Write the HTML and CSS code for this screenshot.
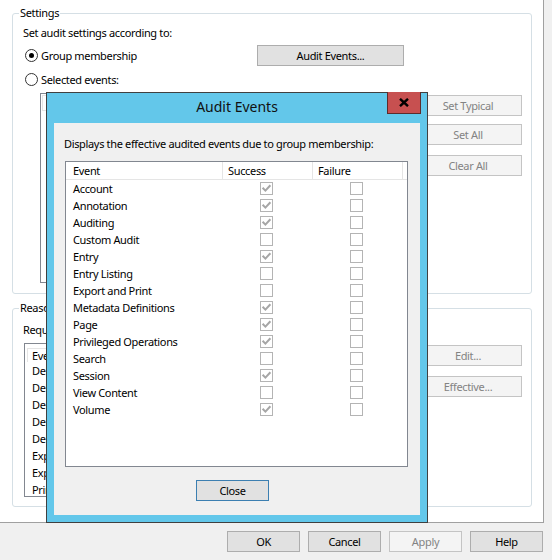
FILE: index.html
```html
<!DOCTYPE html>
<html>
<head>
<meta charset="utf-8">
<title>Audit Settings</title>
<link rel="stylesheet" href="styles.css">
</head>
<body>
<div class="app">
  <div class="top">
    <div class="panel">
      <fieldset class="group settings">
        <legend>Settings</legend>
        <div class="intro">Set audit settings according to:</div>
        <div class="choice-row first">
          <label class="radio-label"><span class="radio checked"></span>Group membership</label>
          <button class="btn audit-btn">Audit Events...</button>
        </div>
        <div class="choice-row second">
          <label class="radio-label"><span class="radio"></span>Selected events:</label>
        </div>
        <div class="area events-area">
          <div class="listbox events-list">
            <div class="list-head">Event</div>
          </div>
          <div class="side-buttons">
            <button class="btn disabled">Set Typical</button>
            <button class="btn disabled set-all">Set All</button>
            <button class="btn disabled clear-all">Clear All</button>
          </div>
        </div>
      </fieldset>
      <fieldset class="group reasons">
        <legend>Reasons</legend>
        <div class="intro req-text">Required:</div>
        <div class="area reasons-area">
          <div class="listbox reasons-list">
            <div class="r-head">Event</div>
            <div class="r-row">Delete</div>
            <div class="r-row">Delete</div>
            <div class="r-row">Delete</div>
            <div class="r-row">Delete</div>
            <div class="r-row">Delete</div>
            <div class="r-row">Export</div>
            <div class="r-row">Export</div>
            <div class="r-row">Print</div>
          </div>
          <div class="side-buttons">
            <button class="btn disabled edit">Edit...</button>
            <button class="btn disabled effective">Effective...</button>
          </div>
        </div>
      </fieldset>
    </div>
    <div class="strip"></div>
  </div>
  <div class="button-bar">
    <button class="btn">OK</button>
    <button class="btn">Cancel</button>
    <button class="btn disabled">Apply</button>
    <button class="btn">Help</button>
  </div>

  <div class="dialog">
    <div class="titlebar">
      Audit Events
      <span class="close-x"><svg width="10" height="9" viewBox="0 0 10 9"><path d="M1 0.8 L9 8.2 M9 0.8 L1 8.2" stroke="#000" stroke-width="2.4" fill="none"/></svg></span>
    </div>
    <div class="client">
      <div class="desc">Displays the effective audited events due to group membership:</div>
      <div class="ae-list">
        <div class="ae-head">
          <div class="h-cell ev">Event</div>
          <div class="h-cell">Success</div>
          <div class="h-cell">Failure</div>
        </div>
        <div class="ae-row"><div class="ev">Account</div><div class="cb-cell"><span class="cb checked"><svg viewBox="0 0 11 11"><path d="M1.6 4.8 L4.4 7.6 L9.4 2.2"/></svg></span></div><div class="cb-cell"><span class="cb"></span></div></div>
        <div class="ae-row"><div class="ev">Annotation</div><div class="cb-cell"><span class="cb checked"><svg viewBox="0 0 11 11"><path d="M1.6 4.8 L4.4 7.6 L9.4 2.2"/></svg></span></div><div class="cb-cell"><span class="cb"></span></div></div>
        <div class="ae-row"><div class="ev">Auditing</div><div class="cb-cell"><span class="cb checked"><svg viewBox="0 0 11 11"><path d="M1.6 4.8 L4.4 7.6 L9.4 2.2"/></svg></span></div><div class="cb-cell"><span class="cb"></span></div></div>
        <div class="ae-row"><div class="ev">Custom Audit</div><div class="cb-cell"><span class="cb"></span></div><div class="cb-cell"><span class="cb"></span></div></div>
        <div class="ae-row"><div class="ev">Entry</div><div class="cb-cell"><span class="cb checked"><svg viewBox="0 0 11 11"><path d="M1.6 4.8 L4.4 7.6 L9.4 2.2"/></svg></span></div><div class="cb-cell"><span class="cb"></span></div></div>
        <div class="ae-row"><div class="ev">Entry Listing</div><div class="cb-cell"><span class="cb"></span></div><div class="cb-cell"><span class="cb"></span></div></div>
        <div class="ae-row"><div class="ev">Export and Print</div><div class="cb-cell"><span class="cb"></span></div><div class="cb-cell"><span class="cb"></span></div></div>
        <div class="ae-row"><div class="ev">Metadata Definitions</div><div class="cb-cell"><span class="cb checked"><svg viewBox="0 0 11 11"><path d="M1.6 4.8 L4.4 7.6 L9.4 2.2"/></svg></span></div><div class="cb-cell"><span class="cb"></span></div></div>
        <div class="ae-row"><div class="ev">Page</div><div class="cb-cell"><span class="cb checked"><svg viewBox="0 0 11 11"><path d="M1.6 4.8 L4.4 7.6 L9.4 2.2"/></svg></span></div><div class="cb-cell"><span class="cb"></span></div></div>
        <div class="ae-row"><div class="ev">Privileged Operations</div><div class="cb-cell"><span class="cb checked"><svg viewBox="0 0 11 11"><path d="M1.6 4.8 L4.4 7.6 L9.4 2.2"/></svg></span></div><div class="cb-cell"><span class="cb"></span></div></div>
        <div class="ae-row"><div class="ev">Search</div><div class="cb-cell"><span class="cb"></span></div><div class="cb-cell"><span class="cb"></span></div></div>
        <div class="ae-row"><div class="ev">Session</div><div class="cb-cell"><span class="cb checked"><svg viewBox="0 0 11 11"><path d="M1.6 4.8 L4.4 7.6 L9.4 2.2"/></svg></span></div><div class="cb-cell"><span class="cb"></span></div></div>
        <div class="ae-row"><div class="ev">View Content</div><div class="cb-cell"><span class="cb"></span></div><div class="cb-cell"><span class="cb"></span></div></div>
        <div class="ae-row"><div class="ev">Volume</div><div class="cb-cell"><span class="cb checked"><svg viewBox="0 0 11 11"><path d="M1.6 4.8 L4.4 7.6 L9.4 2.2"/></svg></span></div><div class="cb-cell"><span class="cb"></span></div></div>
      </div>
      <button class="btn close-btn">Close</button>
    </div>
  </div>
</div>
</body>
</html>
```

FILE: styles.css
```css
* { box-sizing: border-box; }
html, body { margin: 0; padding: 0; }
body {
  width: 552px;
  height: 560px;
  overflow: hidden;
  background: #f0f0f0;
  font-family: "Noto Sans", "Open Sans", sans-serif;
  font-size: 11px;
  letter-spacing: -0.34px;
  color: #000;
}
.app { position: relative; width: 552px; height: 560px; }
.top { display: flex; height: 523px; }
.panel {
  width: 544px;
  height: 523px;
  background: #fff;
  border-right: 1px solid #a0a0a0;
  border-bottom: 1px solid #a0a0a0;
  padding: 5px 0 0 12px;
}
.strip { flex: 1; }

.group {
  margin: 0;
  width: 520px;
  min-inline-size: 0;
  border: 1px solid #d5dfe5;
  border-radius: 3px;
  padding: 0 9px 10px 6px;
}
.group legend { padding: 0 1px; margin: 0; line-height: 16px; }
.reasons { margin-top: 6px; padding-bottom: 9px; }

.intro { margin-top: 4px; padding-left: 4px; line-height: 16px; white-space: nowrap; }
.req-text { margin-top: 6px; }

.choice-row { display: flex; align-items: center; }
.choice-row.first {
  display: grid;
  grid-template-columns: 238px 147px;
  align-items: center;
  height: 21px;
  margin-top: 4px;
}
.choice-row.second { height: 16px; margin-top: 5px; }
.radio-label { display: flex; align-items: center; gap: 3px; padding-left: 6px; }
.radio {
  width: 13px;
  height: 13px;
  border: 1px solid #333;
  border-radius: 50%;
  background: #fff;
  display: inline-flex;
  align-items: center;
  justify-content: center;
}
.radio.checked::after {
  content: "";
  width: 5px;
  height: 5px;
  border-radius: 50%;
  background: #000;
}

.btn {
  font-family: inherit;
  font-size: 11px;
  letter-spacing: inherit;
  color: #000;
  height: 21px;
  width: 73px;
  padding: 0;
  background: #e1e1e1;
  border: 1px solid #adadad;
  line-height: 18px;
}
.btn.disabled { background: #f4f4f4; border-color: #c4c4c4; color: #838383; }
.audit-btn { width: 147px; }

.area { display: grid; grid-template-columns: 1fr 108px; column-gap: 8px; }
.events-area { margin-top: 6px; }
.reasons-area { margin-top: 5px; }
.side-buttons { display: flex; flex-direction: column; }
.side-buttons .btn { width: 108px; }
.side-buttons .btn:first-child { margin-top: 2px; }
.set-all { margin-top: 8px; }
.clear-all { margin-top: 10px; }
.side-buttons .edit { margin-top: 1px; }
.effective { margin-top: 10px; }

.listbox { border: 1px solid #828790; background: #fff; overflow: hidden; }
.events-list { margin-left: 21px; height: 190px; padding: 1px 0 0 1px; }
.list-head { height: 16px; border: 1px solid #e5e5e5; padding-left: 6px; line-height: 14px; }
.reasons-list { margin-left: 5px; height: 154px; padding: 4px 0 0 2px; }
.r-head { height: 14px; border-top: 1px solid #e5e5e5; border-left: 1px solid #e5e5e5; padding-left: 4px; line-height: 13px; }
.r-row { height: 17px; line-height: 17px; padding-left: 5px; white-space: nowrap; }

.button-bar {
  height: 37px;
  display: flex;
  justify-content: flex-end;
  gap: 8px;
  padding: 8px 9px 0 0;
}

/* Dialog window floating over the property page */
.dialog {
  position: absolute;
  left: 46px;
  top: 92px;
  width: 382px;
  height: 431px;
  border: 1px solid #404040;
  background: #63c7ea;
  padding: 0 7px 7px;
  display: flex;
  flex-direction: column;
}
.titlebar {
  position: relative;
  height: 30px;
  line-height: 28px;
  text-align: center;
  font-size: 14px;
  letter-spacing: 0;
  color: #111;
}
.close-x {
  position: absolute;
  top: -1px;
  right: -1px;
  width: 34px;
  height: 22px;
  background: #c75050;
  border: 1px solid #5d2b2b;
  border-top: 0;
  display: flex;
  align-items: center;
  justify-content: center;
}
.close-x svg { display: block; }
.client { flex: 1; background: #f0f0f0; padding: 13px 0 0 10px; }
.desc { line-height: 16px; white-space: nowrap; }
.ae-list {
  margin: 9px 0 0 1px;
  width: 343px;
  height: 306px;
  border: 1px solid #828790;
  background: #fff;
}
.ae-head {
  display: grid;
  grid-template-columns: 157px 90px 90px;
  height: 18px;
  border-bottom: 1px solid #e5e5e5;
}
.h-cell { border-right: 1px solid #e5e5e5; line-height: 17px; padding-left: 5px; }
.h-cell.ev { padding-left: 7px; }
.ae-row {
  display: grid;
  grid-template-columns: 157px 90px 90px;
  height: 17px;
  align-items: center;
}
.ae-row .ev { padding-left: 7px; white-space: nowrap; line-height: 17px; }
.cb-cell { padding-left: 37px; height: 17px; display: flex; align-items: center; }
.cb {
  width: 13px;
  height: 13px;
  border: 1px solid #b4b4b4;
  background: #fff;
  display: block;
}
.cb svg { display: block; width: 11px; height: 11px; }
.cb path { stroke: #a6a6a6; stroke-width: 2; fill: none; }
.close-btn { margin: 13px 0 0 132px; border-color: #3c7fb1; }
```
